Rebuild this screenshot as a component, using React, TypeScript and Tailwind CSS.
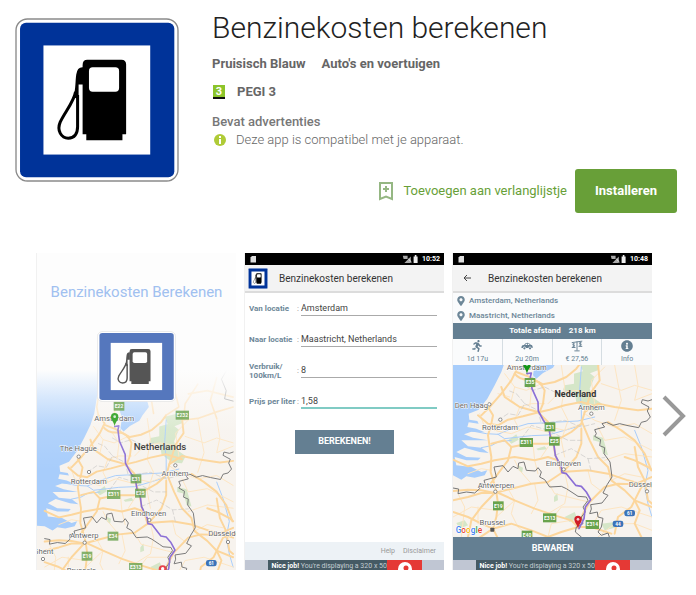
import React from "react";
import { FaInfoCircle, FaCarSide, FaMapMarkerAlt, FaRunning } from "react-icons/fa";

function PumpSign({ className, blue = "#003399", ink = "#000000", edge = "#8a8a8a" }: { className?: string; blue?: string; ink?: string; edge?: string }) {
  return (
    <svg viewBox="46 55 490 490" preserveAspectRatio="none" className={className} role="img" aria-label="Benzinepomp">
      <rect x="49" y="58" width="484" height="484" rx="34" fill="#fff" stroke={edge} strokeWidth="4" />
      <rect x="61" y="69" width="461" height="462" rx="18" fill={blue} />
      <rect x="131" y="137" width="319" height="326" fill="#fff" />
      <path d="M262 180H364Q378 180 378 194V402H367V420H259V402H248V196Q248 180 262 180Z" fill={ink} />
      <rect x="267" y="202" width="90" height="73" rx="11" fill="#fff" />
      <path d="M250 202Q232 200 229 224C226 245 228 262 221 292L236 298V254H250Z" fill={ink} />
      <path d="M227 275C222 305 195 336 181 366C170 392 185 414 205 414C224 414 233 400 233 380V285" fill="none" stroke={ink} strokeWidth="9" />
    </svg>
  );
}

const highways = [
  "M185 5L205 30L190 60L160 100L125 140L100 165",
  "M205 35L240 48L285 72L320 65L355 50L385 25L400 5",
  "M200 40Q215 60 245 58T290 90L285 130L275 155",
  "M90 165L120 190L150 195L180 178L225 168L275 155L305 148L350 135L400 125L450 140",
  "M120 140L135 165L130 190L120 225L125 260L130 290L128 335L140 375L145 395",
  "M160 80L170 110L215 140L270 155L300 185L306 220L316 250L322 285L342 335",
  "M130 250L170 240L190 260L240 250L300 250L325 240L370 215L400 190L410 155L450 130L500 140L570 150L612 145",
  "M15 298L60 318L100 310L140 300L200 290L260 300L300 290L330 300L340 335L420 330L480 340L540 360L612 380",
  "M15 392L60 388L100 390L140 398L190 385L250 370L300 365L345 335L385 290L400 250L400 205",
  "M400 180L425 240L450 290L480 320L490 360L530 390L560 420L612 440",
  "M480 185L520 210L560 240L590 280L610 330",
  "M145 395L150 430L145 470L135 505L100 490L60 470L15 455",
  "M145 395L200 420L260 445L320 465L370 480L390 500L430 500L490 520",
  "M135 505L190 490L250 510L300 530L340 515L390 500",
  "M390 500L405 460L425 425L470 380L510 370L560 372L612 350",
  "M500 520L510 470L550 440L560 420L580 380L612 370",
  "M450 12L455 60L430 95L410 155",
  "M560 420L575 450L560 490L580 530",
  "M190 260L180 300L150 340L128 370",
  "M15 420L60 410L100 398L140 398L100 440L70 480L60 530",
  "M530 290L560 300L600 320L612 330M560 260L570 320L590 360L600 420L612 430",
  "M135 505L150 535M135 505L90 535",
];

const byways = [
  "M170 40L200 80L235 90L280 70M230 60L250 90L245 140M200 80L190 120L215 140L200 180L215 210",
  "M60 340L100 325L130 330M200 300L215 330L250 370M255 250L260 300L270 340M140 210L190 220L240 200L300 215",
  "M300 130L330 100L380 90L440 100M340 15L350 80L340 140L360 180L340 240L350 290",
  "M460 70L520 90L560 75L612 90M500 15L510 70L520 120L500 180M560 15L570 75L560 120L612 100",
  "M410 160L440 180L500 200L560 190L612 220M440 130L430 60L470 20M450 200L470 240L530 230L612 270",
  "M420 330L430 370L470 400M350 335L360 380L350 430L300 460M200 420L190 460L210 500M260 370L270 420L250 460",
  "M15 470L70 440L145 450M40 530L50 440L30 400M180 385L200 420L145 470M300 365L320 400L400 420L425 425",
  "M470 300L530 280L612 290M490 360L530 340L580 350M430 500L460 450L520 440L612 470M450 530L500 490L560 490L612 510",
  "M215 140L250 130L290 130M95 160L110 200L160 215M305 200L350 210L400 190M230 15L240 48M150 100L185 110",
  "M320 465L340 440L400 440M300 530L310 490L370 480M210 500L250 530M90 490L90 440M280 290L300 260",
];

const older = [
  "M182 -150L190 -80L180 -20L185 5M250 -90L240 -40L235 10M345 -60L380 -80L430 -60L440 -20L400 5",
  "M612 -20L560 -5L500 15L455 20M560 -110L540 -40L560 15M470 -60L530 -70L612 -50M455 20L460 -30L500 -90M360 0L350 -60L370 -100",
];

const border = "M612 118L600 122L583 118L580 128L603 140L598 152L607 170L596 182L580 186L572 202L540 196L515 190L495 195L475 186L462 190L470 200L440 208L445 220L440 228L458 238L455 256L470 262L468 280L486 305L492 350L478 372L465 398L480 405L462 428L428 433L430 446L425 460L448 455L450 470L465 474L460 500L450 515L460 525L480 518L485 533";
const southBorder = "M15 383L32 386L30 400L55 395L80 398L95 385L95 370L112 373L108 360L145 350L138 320L165 316L180 335L195 318L210 325L212 308L228 305L235 330L262 332L270 322L280 335L275 350L290 358L305 380L340 378L355 385L378 400L390 408L415 410L420 420L405 440L412 455L400 470L405 490L385 500L382 515L400 530";

function MapLand({ full = false }: { full?: boolean }) {
  return (
    <g fill="none" strokeLinejoin="round" strokeLinecap="round">
      <rect x="-80" y="-300" width="780" height="900" fill="#f7f3ee" />
      <g fill="#d5e6c8">
        <path d="M378 40L415 30L440 50L425 85L432 110L462 130L450 152L420 150L385 125L380 95L345 90L350 75L378 70Z" />
        <path d="M395 10L460 -5L450 30L410 45ZM180 240L205 222L212 238L190 250ZM265 265L290 258L297 267L270 270ZM318 410L328 398L330 420L318 425ZM350 470L380 455L388 475L365 485Z" />
        <path d="M435 225L465 232L480 285L465 280L455 245L435 240ZM25 488L50 480L60 495L35 505ZM460 490L500 485L510 500L470 510ZM210 315L225 322L222 338L212 330Z" />
      </g>
      <path fill="#a8cdfb" d="M-80 -300H190L185 -150L182 -60L172 0L160 35L140 75L118 115L92 148L62 160L64 178L88 182L92 190L62 186L58 200L85 205L110 216L70 214L48 222L75 232L120 240L70 240L40 240L60 258L100 262L122 278L95 275L50 262L25 275L55 290L98 292L90 300L55 300L20 290L25 315L70 320L100 335L118 330L110 345L80 352L55 348L40 358L15 345L-80 340Z" />
      <path fill="#a8cdfb" d="M265 -60L330 -75L345 -20L325 5L315 22L285 38L265 55L255 45L260 12L252 -10Z" />
      <path stroke="#a8cdfb" strokeWidth="3" d="M62 210L115 220L150 222L190 205L240 190L280 188L330 185L390 182L440 170M150 222L170 235L215 230L250 226L300 224L350 210L400 195M100 262L130 256L150 245L190 240M255 50L250 62M400 180L400 140L395 90L400 20M560 210L580 260L600 330L590 380L600 430L612 470" />
      <g stroke="#fde5c2" strokeWidth="3">{byways.map((d) => <path key={d} d={d} />)}</g>
      <g stroke="#fcd69c" strokeWidth="6">{highways.map((d) => <path key={d} d={d} />)}</g>
      {!full && <g stroke="#fcdfb5" strokeWidth="5">{older.map((d) => <path key={d} d={d} />)}</g>}
      <path stroke="#c9c7c5" strokeWidth="2" strokeDasharray="14 8" d="M150 180L180 160L210 165L230 130L205 100L185 92M230 130L270 150L280 190L350 180L400 200L440 190M230 75L255 90L290 80L330 100L360 90M220 235L250 195L300 210L360 240L400 240M320 285L370 265L420 295L470 292M420 295L430 335" />
      <path stroke="#777" strokeWidth="3" d={border} />
      <path stroke="#777" strokeWidth="3" d={southBorder} />
      {!full && <path stroke="#888" strokeWidth="3" d="M590 -130L575 -105L590 -70L585 -45L612 -38" />}
      <path stroke="#8b6fd6" strokeWidth="5" d="M237 40L250 38L247 50L252 85L270 125L271 152L285 178L303 205L308 235L318 255L322 285L340 320L342 337L355 340L383 375L400 378L415 395L428 418L412 440L408 475L393 505" />
    </g>
  );
}

type Mark = [string, number, number];

function Shields({ items }: { items: Mark[] }) {
  return (
    <g fontSize="15" fontWeight="700" textAnchor="middle">
      {items.map(([t, x, y]) => (
        <g key={t + x}>
          <rect x={x - 4 - t.length * 4} y={y - 13} width={8 + t.length * 8} height="27" fill="#69a34d" />
          <text x={x} y={y + 6} fill="#fff">{t}</text>
        </g>
      ))}
    </g>
  );
}

function Places({ items }: { items: Mark[] }) {
  return (
    <g fontSize="23" fill="#666" textAnchor="middle" stroke="#fff" strokeWidth="3" paintOrder="stroke">
      {items.map(([t, x, y]) => <text key={t} x={x} y={y}>{t}</text>)}
    </g>
  );
}

function Dots({ at }: { at: [number, number][] }) {
  return <g fill="#fff" stroke="#777" strokeWidth="2.5">{at.map(([x, y]) => <circle key={x} cx={x} cy={y} r="5" />)}</g>;
}

function Pin({ x, y, color }: { x: number; y: number; color: string }) {
  return (
    <g transform={`translate(${x} ${y})`}>
      <path d="M0 0C-2 -14 -11 -18 -11 -29A11 11 0 0 1 11 -29C11 -18 2 -14 0 0Z" fill={color} />
      <circle cy="-29" r="4" fill="#fff" opacity=".8" />
    </g>
  );
}

function Autobahn({ t, x, y }: { t: string; x: number; y: number }) {
  return (
    <g>
      <rect x={x - 16} y={y - 9} width="32" height="19" rx="7" fill="#3b73b9" />
      <text x={x} y={y + 6} fontSize="14" fontWeight="700" textAnchor="middle" fill="#fff">{t}</text>
    </g>
  );
}

function SplashMap() {
  return (
    <svg viewBox="21 -105 597 600" className="col-start-1 row-start-1 block w-full self-end" fontFamily="Roboto, sans-serif" aria-hidden="true">
      <defs>
        <linearGradient id="haze" x1="0" y1="0" x2="0" y2="1">
          <stop offset="0" stopColor="#fdfdfd" />
          <stop offset=".14" stopColor="#fdfdfd" stopOpacity=".55" />
          <stop offset=".3" stopColor="#fdfdfd" stopOpacity=".12" />
          <stop offset=".5" stopColor="#fdfdfd" stopOpacity="0" />
        </linearGradient>
      </defs>
      <g transform="matrix(.947 0 0 .98 29.8 25.5)"><MapLand /></g>
      <rect x="21" y="-105" width="600" height="600" fill="url(#haze)" />
      <Dots at={[[146, 155], [177, 201], [436, 181], [164, 413], [358, 345], [594, 411], [39, 462]]} />
      <g opacity=".8"><Shields items={[["E22", 267, 3], ["E232", 457, 30], ["E31", 318, 221], ["E25", 331, 264], ["E311", 251, 268], ["E34", 249, 393], ["E19", 171, 453], ["E313", 317, 487]]} /></g>
      <Places items={[["Amsterdam", 253, 47], ["The Hague", 145, 139], ["Rotterdam", 176, 236], ["Arnhem", 435, 213], ["Eindhoven", 356, 333], ["Antwerp", 163, 398], ["Düsseldorf", 590, 394], ["Ghent", 40, 446], ["Brussels", 154, 504]]} />
      <text x="390" y="136" fontSize="29" fontWeight="500" fill="#444" textAnchor="middle">Netherlands</text>
      <Autobahn t="61" x={544} y={474} />
      <Pin x={254} y={64} color="#43a935" />
      <circle cx="398" cy="493" r="12" fill="#e8434a" /><circle cx="398" cy="491" r="5" fill="#fff" />
    </svg>
  );
}

function RouteMap() {
  return (
    <svg viewBox="15 14 597 519" className="block w-full" fontFamily="Roboto, sans-serif" role="img" aria-label="Route">
      <MapLand full />
      <Dots at={[[124, 132], [157, 178], [430, 160], [142, 394], [347, 327], [597, 393]]} />
      <rect x="127" y="502" width="12" height="12" rx="2" fill="#555" />
      <Shields items={[["E35", 246, 66], ["E31", 306, 199], ["E25", 319, 242], ["E311", 235, 246], ["E19", 151, 436], ["E313", 305, 472], ["E314", 433, 492], ["E40", 237, 524]]} />
      <Places items={[["Amsterdam", 236, 28], ["Den Haag", 70, 142], ["Rotterdam", 156, 209], ["Arnhem", 430, 148], ["Eindhoven", 346, 317], ["Antwerpen", 144, 383], ["Düsseldorf", 598, 380], ["Brussel", 133, 494]]} />
      <text x="382" y="111" fontSize="27" fontWeight="700" fill="#333" textAnchor="middle">Nederland</text>
      <Autobahn t="61" x={545} y={458} />
      <Autobahn t="44" x={510} y={490} />
      <Pin x={237} y={41} color="#159617" />
      <Pin x={390} y={506} color="#d01c26" />
      <text x="23" y="518" fontSize="25" fontWeight="500" stroke="#fff" strokeWidth="3" paintOrder="stroke">
        <tspan fill="#4285f4">G</tspan><tspan fill="#ea4335">o</tspan><tspan fill="#fbbc05">o</tspan><tspan fill="#4285f4">g</tspan><tspan fill="#34a853">l</tspan><tspan fill="#ea4335">e</tspan>
      </text>
    </svg>
  );
}

function StatusBar({ time }: { time: string }) {
  return (
    <div className="flex h-3 shrink-0 items-center justify-between bg-black px-1 text-[7px] font-bold text-white">
      <svg viewBox="0 0 8 8" className="h-2 w-2"><path d="M3 1H7V7.500H1.500V2.500Z" fill="#ddd" /></svg>
      <span className="flex items-center gap-1">
        <svg viewBox="0 0 20 10" className="h-2 w-4">
          <path d="M1 1H7V5H2ZM11 2V10H3Z" fill="#aaa" /><path d="M8 5L12 9" stroke="#fff" />
          <path d="M15 2H16V0H18V2H19.500V10H14.500V2Z" fill="#eee" />
        </svg>
        {time}
      </span>
    </div>
  );
}

function AdBanner() {
  return (
    <div className="flex h-[10px] shrink-0 justify-center overflow-hidden bg-[#c0c6d3]">
      <p className="w-[119px] bg-[#455a64] pt-[2px] pl-1 text-[7px] leading-[8px] whitespace-nowrap text-[#c3cdd2]">
        <b className="text-white">Nice job!</b> You're displaying a 320 x 50
      </p>
      <div className="w-[35px] bg-[#e53935]">
        <svg viewBox="0 0 35 10" className="h-[10px] w-full"><circle cx="18" cy="9" r="7" fill="#fff" /><circle cx="19" cy="8" r="2.500" fill="#e53935" /></svg>
      </div>
    </div>
  );
}

const fields = [
  { id: "van", label: "Van locatie", value: "Amsterdam" },
  { id: "naar", label: "Naar locatie", value: "Maastricht, Netherlands" },
  { id: "verbruik", label: "Verbruik/ 100km/L", value: "8" },
  { id: "prijs", label: "Prijs per liter", value: "1,58" },
];

function FormShot() {
  return (
    <article className="flex h-[317px] min-w-0 flex-col border-l border-[#f1f1f1] bg-white">
      <StatusBar time="10:52" />
      <header className="flex h-7 shrink-0 items-center gap-[11px] border-b-2 border-[#dcdcdc] bg-[#f3f3f3] pl-[3px] text-[10px] text-[#333]">
        <PumpSign className="h-[21px] w-5" edge="#003399" />
        Benzinekosten berekenen
      </header>
      <form className="flex flex-1 flex-col" onSubmit={(e) => e.preventDefault()}>
        {fields.map((f) => (
          <div key={f.id} className="flex h-[31px] items-center pr-[7px] pl-1">
            <label htmlFor={f.id} className="w-12 text-[8px] leading-[9px] font-bold text-[#6d8798]">{f.label}</label>
            <span className="w-1 text-[8px] text-[#888]">:</span>
            <input id={f.id} defaultValue={f.value} className={"h-[14px] min-w-0 flex-1 text-[9px] text-[#444] outline-none " + (f.id === "prijs" ? "border-b-2 border-[#80cbc4]" : "border-b border-[#aaa]")} />
          </div>
        ))}
        <button className="mt-[13px] h-6 w-[99px] self-center bg-[#647f92] text-[9px] font-bold text-white">BEREKENEN!</button>
      </form>
      <nav className="flex h-[18px] items-center justify-end gap-2 bg-[#edf2f6] pr-2 text-[7px] text-[#999]">
        <a href="#help">Help</a>
        <a href="#disclaimer">Disclaimer</a>
      </nav>
      <AdBanner />
    </article>
  );
}

function Scales({ className }: { className?: string }) {
  return (
    <svg viewBox="0 0 32 32" className={className} fill="none" stroke="currentColor" strokeWidth="2.500">
      <path d="M16 4V28M9 29H23M2 7L30 3M2 20H12M20 17H30" />
      <path strokeWidth="2" d="M10 10H5V13.500H9V17H4M7 8.500V18.500M28 7H23V10.500H27V14H22M25 5.500V15.500" />
    </svg>
  );
}

function Car({ className }: { className?: string }) {
  return (
    <svg viewBox="0 0 32 32" className={className} fill="currentColor">
      <path fillRule="evenodd" d="M2 16Q3 13 8 13Q12 7 17 7Q22 7 25 12Q31 13 31 17V21H28A4 4 0 0 0 20 21H13A4 4 0 0 0 5 21H1ZM11 13H16V9.500Q13 10 11 13ZM18 13H23Q21 9.500 18 9.500Z" />
      <circle cx="9" cy="22" r="3" /><circle cx="24" cy="22" r="3" />
    </svg>
  );
}

const stats = [
  { text: "1d 17u", icon: <FaRunning className="h-3 w-3" /> },
  { text: "2u 20m", icon: <Car className="h-3 w-3" /> },
  { text: "€ 27,56", icon: <Scales className="h-3 w-3" /> },
  { text: "Info", icon: <FaInfoCircle className="h-3 w-3" /> },
];

function RouteShot() {
  return (
    <article className="flex h-[317px] min-w-0 flex-col overflow-hidden border-l border-[#f1f1f1]">
      <StatusBar time="10:48" />
      <header className="flex h-7 shrink-0 items-center gap-4 border-b-2 border-[#dcdcdc] bg-[#f3f3f3] pl-[9px] text-[10px] text-[#333]">
        <svg viewBox="0 0 10 10" className="h-[10px] w-[10px]"><path d="M9 5H2M5 2L2 5L5 8" stroke="#444" fill="none" /></svg>
        Benzinekosten berekenen
      </header>
      <ul className="shrink-0 bg-[#fafbfc] pl-1 text-[8px] font-medium text-[#6d8798]">
        {["Amsterdam, Netherlands", "Maastricht, Netherlands"].map((p) => (
          <li key={p} className="flex h-[15px] items-center gap-1"><FaMapMarkerAlt className="h-[10px] w-2" />{p}</li>
        ))}
      </ul>
      <p className="flex h-4 shrink-0 items-center justify-center gap-2 bg-[#647f92] text-[8px] font-bold text-white"><span>Totale afstand</span><span>218 km</span></p>
      <div className="grid h-[26px] shrink-0 grid-cols-4 divide-x divide-[#d5dde2] bg-[#fafbfc] text-[7px] leading-[10px] text-[#647f92]">
        {stats.map((s) => (
          <div key={s.text} className="flex flex-col items-center justify-center gap-[2px]">{s.icon}{s.text}</div>
        ))}
      </div>
      <div className="min-h-0 flex-1 overflow-hidden"><RouteMap /></div>
      <button className="h-[23px] shrink-0 bg-[#647f92] text-[9px] font-bold text-white">BEWAREN</button>
      <AdBanner />
    </article>
  );
}

function SplashShot() {
  return (
    <article className="grid h-[317px] min-w-0 overflow-hidden border-l border-[#f1f1f1] bg-[#fdfdfd]">
      <SplashMap />
      <div className="z-10 col-start-1 row-start-1 flex flex-col items-center pt-[30px]">
        <h2 className="text-[15px] leading-[18px] whitespace-nowrap text-[#a0c0f0]">Benzinekosten Berekenen</h2>
        <PumpSign className="mt-[30px] h-[71px] w-[79px]" blue="#5577bd" ink="#555" edge="#dedede" />
      </div>
    </article>
  );
}

export default function App() {
  return (
    <main className="bg-white pb-6 font-['Roboto',sans-serif] text-[#666]">
      <section className="flex gap-[33px] pt-2 pr-[19px] pl-[15px]">
        <PumpSign className="mt-[10px] h-[164px] w-[164px] shrink-0" />
        <div className="flex min-w-0 flex-1 flex-col">
          <h1 className="text-[30px] leading-10 font-light text-[#222]">Benzinekosten berekenen</h1>
          <p className="mt-[6px] flex gap-4 text-[13px] leading-5 font-bold"><a href="#dev">Pruisisch Blauw</a><a href="#cat">Auto's en voertuigen</a></p>
          <p className="mt-2 flex items-center text-[13px] leading-5 font-bold">
            <svg viewBox="0 0 14 14" className="mr-[11px] h-[14px] w-[14px]"><path d="M1 0H13V14H1Z" fill="#8cc42b" /><path d="M1 12H13V14H1Z" fill="#111" /><text x="7" y="10" fontSize="11" fontWeight="700" textAnchor="middle" fill="#fff">3</text></svg>
            PEGI 3
          </p>
          <p className="mt-[10px] text-[13px] leading-5 font-medium text-[#777]">Bevat advertenties</p>
          <p className="flex items-center text-[13px] leading-4 font-light">
            <svg viewBox="0 0 16 16" className="mr-2 h-4 w-4"><circle cx="8" cy="8" r="6" fill="#afcb37" /><path d="M7 4H9V6H7ZM7 7H9V12H7Z" fill="#fff" /></svg>
            Deze app is compatibel met je apparaat.
          </p>
          <div className="mt-[21px] flex items-center justify-end gap-2">
            <button className="flex items-center gap-[9px] text-[13px] text-[#689f38]">
              <svg viewBox="0 0 16 20" className="h-5 w-4" fill="none" stroke="#95b783" strokeWidth="2"><path d="M2 2H14V18L8 15.500L2 18ZM8 5V11M5 8H11" /></svg>
              Toevoegen aan verlanglijstje
            </button>
            <button className="h-11 rounded-[3px] bg-[#689f38] px-5 text-[13px] font-bold text-white">Installeren</button>
          </div>
        </div>
      </section>
      <section className="mt-10 flex items-center pl-9">
        <div className="grid min-w-0 flex-1 grid-cols-3 gap-2">
          <SplashShot />
          <FormShot />
          <RouteShot />
        </div>
        <button aria-label="Volgende" className="w-11 pt-2 pl-[10px]">
          <svg viewBox="0 0 24 42" className="h-[42px] w-6" fill="none" stroke="#999" strokeWidth="4"><path d="M2 2L21 21L2 40" /></svg>
        </button>
      </section>
    </main>
  );
}
